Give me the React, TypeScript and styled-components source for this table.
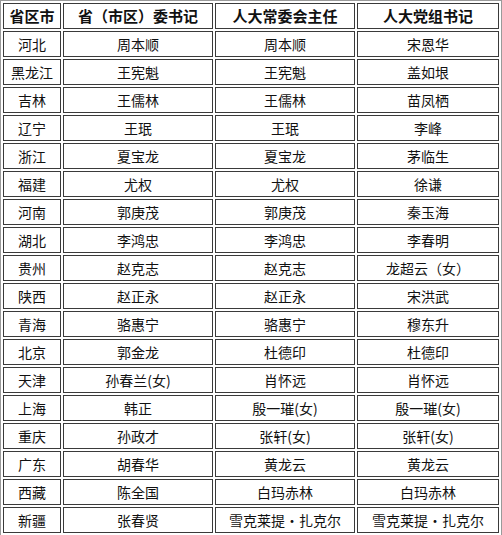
import * as React from "react";
import styled, { createGlobalStyle } from "styled-components";

const GlobalStyle = createGlobalStyle`
  html, body {
    margin: 0;
    padding: 0;
    background: #ffffff;
  }
  body {
    font-family: "Noto Sans CJK SC", "DejaVu Sans", sans-serif;
  }
`;

const STable = styled.table`
  width: 502px;
  border: 1px solid #9a9a9a;
  border-spacing: 2px;
  border-collapse: separate;
  table-layout: fixed;
  background: #ffffff;
`;

const SHeadCell = styled.th<{ $width: number }>`
  width: ${(p) => p.$width}px;
  height: 24px;
  padding: 0;
  border: 1px solid #3a3a3a;
  font-size: 15px;
  font-weight: bold;
  color: #111;
  text-align: center;
  vertical-align: middle;
  line-height: 24px;
`;

const SCell = styled.td`
  height: 24px;
  padding: 0;
  border: 1px solid #3a3a3a;
  font-size: 14px;
  color: #111;
  text-align: center;
  vertical-align: middle;
  line-height: 24px;
  white-space: nowrap;
`;

const headers: { label: string; width: number }[] = [
  { label: "省区市", width: 56 },
  { label: "省（市区）委书记", width: 148 },
  { label: "人大常委会主任", width: 138 },
  { label: "人大党组书记", width: 140 },
];

const rows: string[][] = [
  ["河北", "周本顺", "周本顺", "宋恩华"],
  ["黑龙江", "王宪魁", "王宪魁", "盖如垠"],
  ["吉林", "王儒林", "王儒林", "苗凤栖"],
  ["辽宁", "王珉", "王珉", "李峰"],
  ["浙江", "夏宝龙", "夏宝龙", "茅临生"],
  ["福建", "尤权", "尤权", "徐谦"],
  ["河南", "郭庚茂", "郭庚茂", "秦玉海"],
  ["湖北", "李鸿忠", "李鸿忠", "李春明"],
  ["贵州", "赵克志", "赵克志", "龙超云（女）"],
  ["陕西", "赵正永", "赵正永", "宋洪武"],
  ["青海", "骆惠宁", "骆惠宁", "穆东升"],
  ["北京", "郭金龙", "杜德印", "杜德印"],
  ["天津", "孙春兰(女)", "肖怀远", "肖怀远"],
  ["上海", "韩正", "殷一璀(女)", "殷一璀(女)"],
  ["重庆", "孙政才", "张轩(女)", "张轩(女)"],
  ["广东", "胡春华", "黄龙云", "黄龙云"],
  ["西藏", "陈全国", "白玛赤林", "白玛赤林"],
  ["新疆", "张春贤", "雪克莱提・扎克尔", "雪克莱提・扎克尔"],
];

const App = () => {
  return (
    <React.Fragment>
      <GlobalStyle />
      <STable>
        <thead>
          <tr>
            {headers.map((h) => (
              <SHeadCell key={h.label} $width={h.width}>
                {h.label}
              </SHeadCell>
            ))}
          </tr>
        </thead>
        <tbody>
          {rows.map((row) => (
            <tr key={row[0]}>
              {row.map((cell, i) => (
                <SCell key={i}>{cell}</SCell>
              ))}
            </tr>
          ))}
        </tbody>
      </STable>
    </React.Fragment>
  );
};

export default App;
